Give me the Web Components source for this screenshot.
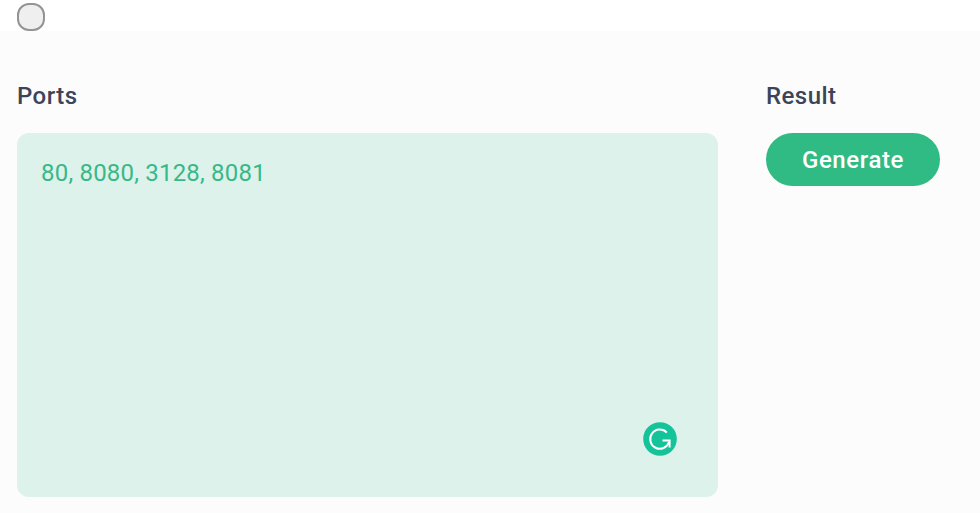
<!DOCTYPE html>
<html>
<head>
<meta charset="utf-8">
<style>
  html, body { margin: 0; background: #fcfcfc; }
  body { font-family: Roboto, "Liberation Sans", sans-serif; height: 513px; overflow: hidden; }
</style>
</head>
<body>
<top-strip></top-strip>
<port-form>
  <form-column slot="ports" label="Ports" wide>
    <port-box>80, 8080, 3128, 8081</port-box>
  </form-column>
  <form-column slot="result" label="Result">
    <generate-button>Generate</generate-button>
  </form-column>
</port-form>
<script>
"use strict";
class TopStrip extends HTMLElement {
  constructor() {
    super();
    this.attachShadow({ mode: 'open' }).innerHTML = `
      <style>
        :host { display: flex; align-items: flex-start; height: 31px; padding: 3px 0 0 17px; box-sizing: border-box; background: #fff; }
        .check { width: 28px; height: 28px; box-sizing: border-box; border: 2px solid #949494; border-radius: 12px; background: #efefef; }
      </style>
      <div class="check"></div>`;
  }
}
class PortForm extends HTMLElement {
  constructor() {
    super();
    this.attachShadow({ mode: 'open' }).innerHTML = `
      <style>
        :host { display: flex; gap: 48px; padding: 49px 0 0 17px; }
      </style>
      <slot name="ports"></slot>
      <slot name="result"></slot>`;
  }
}
class FormColumn extends HTMLElement {
  constructor() {
    super();
    this.attachShadow({ mode: 'open' }).innerHTML = `
      <style>
        :host { display: flex; flex-direction: column; }
        :host([wide]) { width: 701px; }
        .label { height: 32px; line-height: 32px; margin-bottom: 21px; font-size: 24px; font-weight: 500; letter-spacing: .45px; color: #3c4558; }
      </style>
      <div class="label"></div>
      <slot></slot>`;
    this.shadowRoot.querySelector('.label').textContent = this.getAttribute('label');
  }
}
class PortBox extends HTMLElement {
  constructor() {
    super();
    this.attachShadow({ mode: 'open' }).innerHTML = `
      <style>
        :host { display: block; position: relative; height: 364px; box-sizing: border-box; padding: 24px; border-radius: 12px; background: #ddf2ea; color: #38b888; font-size: 24px; line-height: 32px; letter-spacing: .2px; }
        svg { position: absolute; left: 626px; top: 289px; width: 34px; height: 34px; }
      </style>
      <slot></slot>
      <svg viewBox="0 0 34 34">
        <circle cx="17" cy="17" r="16.8" fill="#15c39a"/>
        <path d="M23.8 10.6A9.6 9.6 0 1 0 26 20" fill="none" stroke="#fff" stroke-width="2"/>
        <path d="M19.5 18.4H26.6V25.4" fill="none" stroke="#fff" stroke-width="2"/>
      </svg>`;
  }
}
class GenerateButton extends HTMLElement {
  constructor() {
    super();
    this.attachShadow({ mode: 'open' }).innerHTML = `
      <style>
        :host { display: flex; align-items: center; justify-content: center; width: 174px; height: 53px; border-radius: 27px; background: #31bb84; color: #fff; font-size: 24px; font-weight: 500; letter-spacing: .6px; }
      </style>
      <slot></slot>`;
  }
}
customElements.define('top-strip', TopStrip);
customElements.define('port-form', PortForm);
customElements.define('form-column', FormColumn);
customElements.define('port-box', PortBox);
customElements.define('generate-button', GenerateButton);
</script>
</body>
</html>
